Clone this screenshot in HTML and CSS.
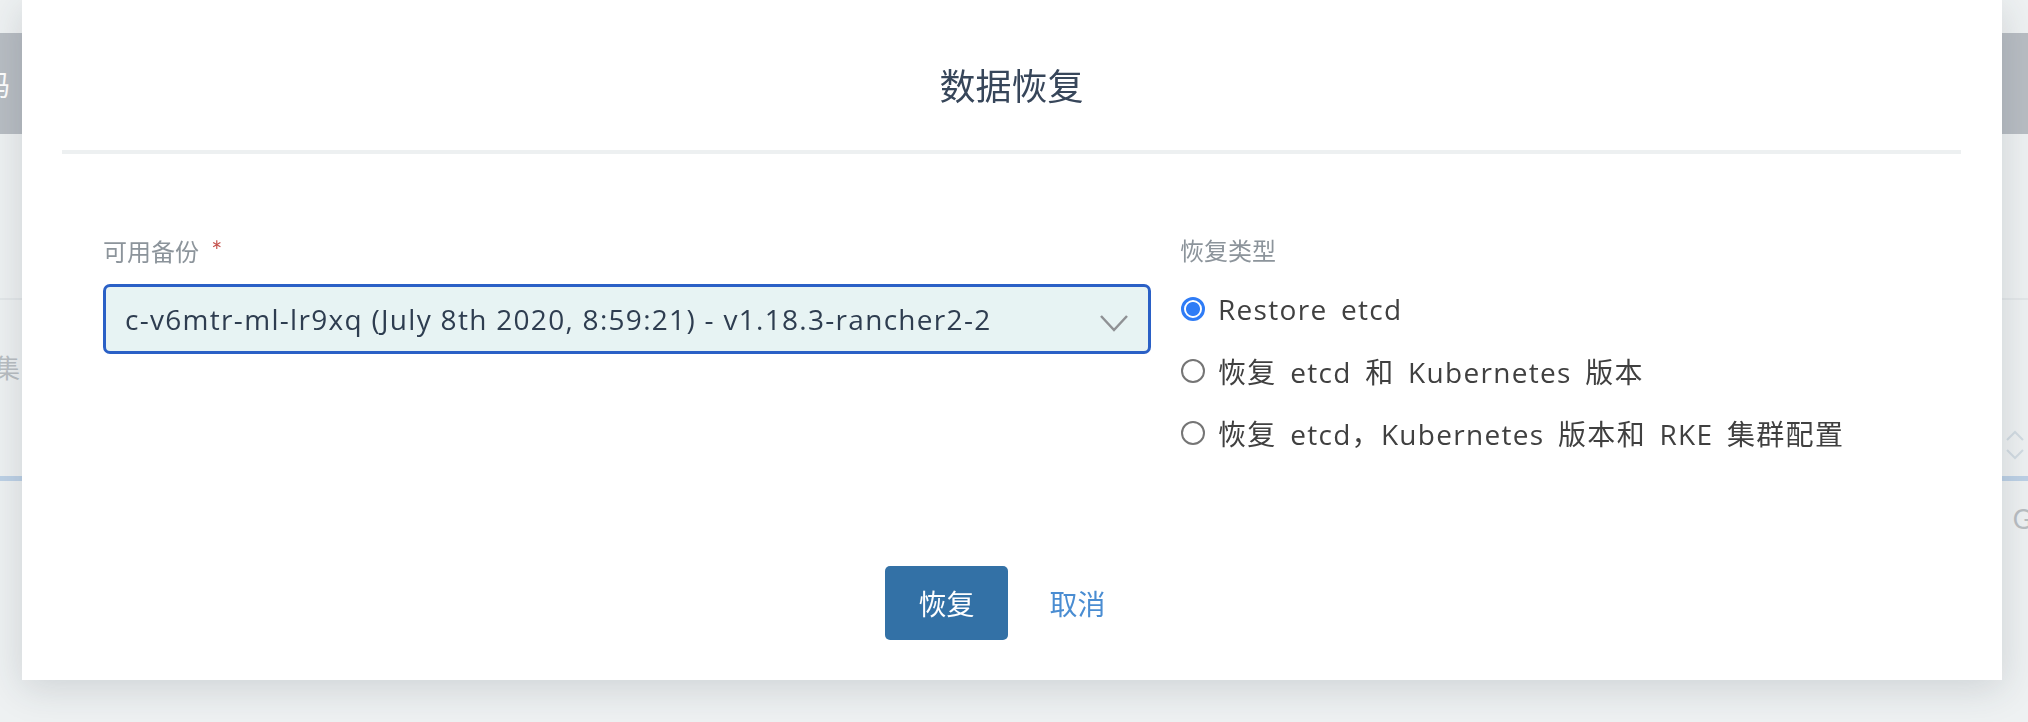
FILE: index.html
```html
<!DOCTYPE html>
<html lang="zh-CN">
<head>
  <meta charset="UTF-8" />
  <title>数据恢复</title>
  <link rel="stylesheet" href="styles.css">
</head>
<body>
  <!-- page behind the dialog -->
  <div class="page">
    <div class="page-top"></div>
    <div class="page-nav">
      <span class="nav-label">编码</span>
    </div>
    <div class="page-body">
      <div class="page-rule"></div>
      <div class="page-row">
        <span class="page-text">集</span>
        <span class="page-updown">
          <svg width="22" height="34" viewBox="0 0 22 34"><polyline points="3,12 11,4 19,12" fill="none" stroke="#d2dbe2" stroke-width="2"/><polyline points="3,22 11,30 19,22" fill="none" stroke="#d2dbe2" stroke-width="2"/></svg>
        </span>
      </div>
      <div class="page-blue"></div>
      <div class="page-row small">
        <span></span>
        <span class="page-text right">Gi</span>
      </div>
    </div>
  </div>

  <!-- dialog -->
  <div class="overlay">
    <div class="modal">
      <header class="modal-header">
        <h2>数据恢复</h2>
      </header>

      <section class="modal-body">
        <div class="col">
          <label class="field-label" for="backup">可用备份 <span class="req">*</span></label>
          <div class="select" id="backup">
            <span class="select-value">c-v6mtr-ml-lr9xq (July 8th 2020, 8:59:21) - v1.18.3-rancher2-2</span>
            <svg class="chevron" width="30" height="18" viewBox="0 0 30 18"><polyline points="2,2 15,16 28,2" fill="none" stroke="#8f9194" stroke-width="2.5"/></svg>
          </div>
        </div>
        <div class="col">
          <div class="field-label">恢复类型</div>
          <div class="radio"><span class="dot checked"></span>Restore etcd</div>
          <div class="radio"><span class="dot"></span>恢复 etcd 和 Kubernetes 版本</div>
          <div class="radio"><span class="dot"></span>恢复 etcd，Kubernetes 版本和 RKE 集群配置</div>
        </div>
      </section>

      <footer class="modal-footer">
        <button class="btn primary">恢复</button>
        <button class="btn link">取消</button>
      </footer>
    </div>
  </div>
</body>
</html>
```

FILE: styles.css
```css
body {
  margin: 0;
  padding: 0;
  font-family: Lato, "Noto Sans CJK SC", sans-serif;
  background: #eef1f2;
  overflow: hidden;
}

/* background page */
.page {
  height: 722px;
  background: #eef1f2;
}
.page-top {
  height: 33px;
}
.page-nav {
  height: 101px;
  background: #b8bdc3;
  display: flex;
  align-items: center;
  overflow: hidden;
}
.nav-label {
  color: #fff;
  font-size: 28px;
  margin-left: -46px;
}
.page-body {
  padding-top: 164px;
}
.page-rule {
  height: 2px;
  background: #e3e7e9;
}
.page-row {
  display: flex;
  justify-content: space-between;
  align-items: flex-start;
  height: 176px;
}
.page-row.small {
  height: 80px;
  padding-top: 22px;
}
.page-text {
  font-size: 26px;
  color: #b9bec2;
  margin: 48px 0 0 -6px;
}
.page-text.right {
  margin: 0 -10px 0 0;
}
.page-updown {
  margin: 128px 2px 0 0;
}
.page-blue {
  height: 5px;
  background: #bdd1e6;
}

/* dialog */
.overlay {
  position: fixed;
  top: 0;
  left: 0;
  right: 0;
}
.modal {
  margin: 0 26px 0 22px;
  background: #fff;
  box-shadow: 0 8px 36px rgba(40, 50, 60, 0.16);
}
.modal-header {
  margin: 0 41px 0 40px;
  padding: 62px 0 40px;
  border-bottom: 4px solid #edf0f1;
  text-align: center;
}
.modal-header h2 {
  margin: 0;
  font-size: 36px;
  line-height: 48px;
  font-weight: 400;
  color: #37465a;
}
.modal-body {
  display: grid;
  grid-template-columns: 1048px 1fr;
  column-gap: 29px;
  padding: 81px 0 0 81px;
}
.field-label {
  display: block;
  font-size: 24px;
  line-height: 32px;
  color: #8c949b;
  margin-bottom: 16px;
}
.col .field-label + .radio {
  margin-top: -5px;
}
.req {
  color: #c4514c;
  font-size: 26px;
  margin-left: 6px;
}
.select {
  box-sizing: border-box;
  height: 70px;
  display: flex;
  align-items: center;
  justify-content: space-between;
  padding: 0 19px 0 19px;
  background: #e7f3f3;
  border: 3px solid #2a60c6;
  border-radius: 7px;
}
.select-value {
  font-family: "Open Sans", "Noto Sans CJK SC", sans-serif;
  font-size: 28px;
  letter-spacing: 1.3px;
  color: #2e3d50;
  white-space: nowrap;
}
.chevron {
  margin-top: 8px;
}
.radio {
  display: flex;
  align-items: center;
  height: 62px;
  font-family: "Open Sans", "Noto Sans CJK SC", sans-serif;
  font-size: 28px;
  letter-spacing: 1.3px;
  color: #404040;
  word-spacing: 5px;
}
.dot {
  box-sizing: border-box;
  width: 24px;
  height: 24px;
  border: 2px solid #757575;
  border-radius: 50%;
  margin: 0 13px 0 1px;
  flex: none;
}
.dot.checked {
  border: 3px solid #2f7cf6;
  background: radial-gradient(circle, #2f7cf6 0 6.5px, #fff 7.5px);
}
.modal-footer {
  display: flex;
  justify-content: center;
  gap: 9px;
  margin-top: 102px;
  padding-bottom: 40px;
}
.btn {
  height: 74px;
  padding: 0 33px;
  font-family: Lato, "Noto Sans CJK SC", sans-serif;
  font-size: 28px;
  border: none;
  border-radius: 5px;
  cursor: pointer;
}
.btn.primary {
  background: #3371a6;
  color: #fff;
}
.btn.link {
  background: transparent;
  color: #4a8dd2;
}
```
